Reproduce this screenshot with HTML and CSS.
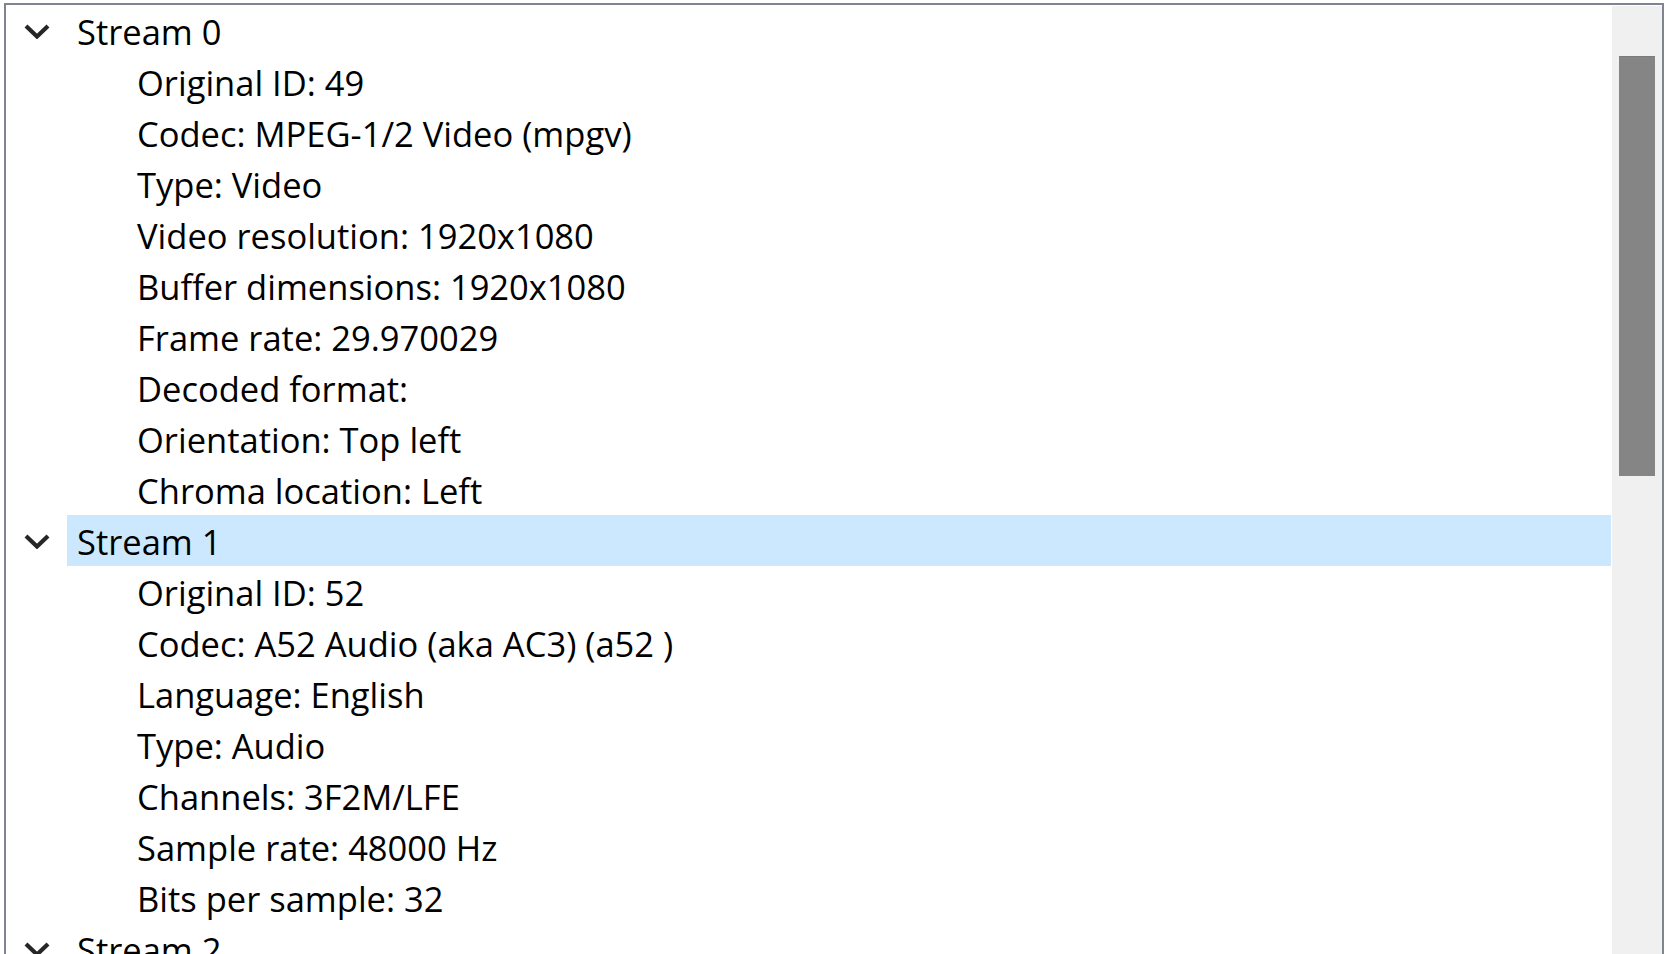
FILE: index.html
```html
<!DOCTYPE html>
<html lang="en">
<head>
<meta charset="utf-8">
<title>Codec</title>
<link rel="stylesheet" href="styles.css">
</head>
<body>
<div class="panel">
  <div class="tree">
    <div class="row header">
      <span class="twisty"><svg width="28" height="16" viewBox="0 0 28 16"><polyline points="3,3 14,13.5 25,3" fill="none" stroke="#262626" stroke-width="4.2"/></svg></span>
      <span class="label">Stream 0</span>
    </div>
    <div class="row child">Original ID: 49</div>
    <div class="row child">Codec: MPEG-1/2 Video (mpgv)</div>
    <div class="row child">Type: Video</div>
    <div class="row child">Video resolution: 1920x1080</div>
    <div class="row child">Buffer dimensions: 1920x1080</div>
    <div class="row child">Frame rate: 29.970029</div>
    <div class="row child">Decoded format:</div>
    <div class="row child">Orientation: Top left</div>
    <div class="row child">Chroma location: Left</div>
    <div class="row header">
      <span class="twisty"><svg width="28" height="16" viewBox="0 0 28 16"><polyline points="3,3 14,13.5 25,3" fill="none" stroke="#262626" stroke-width="4.2"/></svg></span>
      <span class="label selected">Stream 1</span>
    </div>
    <div class="row child">Original ID: 52</div>
    <div class="row child">Codec: A52 Audio (aka AC3) (a52 )</div>
    <div class="row child">Language: English</div>
    <div class="row child">Type: Audio</div>
    <div class="row child">Channels: 3F2M/LFE</div>
    <div class="row child">Sample rate: 48000 Hz</div>
    <div class="row child">Bits per sample: 32</div>
    <div class="row header">
      <span class="twisty"><svg width="28" height="16" viewBox="0 0 28 16"><polyline points="3,3 14,13.5 25,3" fill="none" stroke="#262626" stroke-width="4.2"/></svg></span>
      <span class="label">Stream 2</span>
    </div>
  </div>
  <div class="scrollbar">
    <div class="thumb"></div>
  </div>
</div>
</body>
</html>
```
FILE: styles.css
```css
html, body {
  margin: 0;
  padding: 0;
  background: #ffffff;
  overflow: hidden;
  height: 954px;
}

.panel {
  margin: 3px 0 0 4px;
  width: 1660px;
  height: 960px;
  box-sizing: border-box;
  border: 2px solid #80848f;
  border-bottom: none;
  display: flex;
  background: #ffffff;
}

.tree {
  flex: 1;
  min-width: 0;
  font-family: "Open Sans", "Noto Sans", sans-serif;
  font-size: 34.5px;
  color: #000000;
}

.row {
  height: 51px;
  box-sizing: border-box;
  white-space: nowrap;
}

.child {
  padding-left: 131px;
  padding-top: 2px;
  line-height: 49px;
}

.header {
  display: flex;
}

.twisty {
  width: 61px;
  flex: none;
  display: flex;
  align-items: center;
  justify-content: center;
  padding-left: 1px;
  box-sizing: border-box;
}

.twisty svg {
  display: block;
}

.label {
  flex: 1;
  padding: 2px 0 0 10px;
  line-height: 49px;
  margin-right: 1px;
}

.label.selected {
  background: #cce8ff;
}

.scrollbar {
  width: 50px;
  flex: none;
  background: #f0f0f0;
  margin-top: 1px;
  padding-left: 7px;
  box-sizing: border-box;
}

.thumb {
  margin-top: 50px;
  width: 36px;
  height: 420px;
  background: #858585;
  border-top: 1px solid #7b7b7b;
  box-sizing: border-box;
}
```
